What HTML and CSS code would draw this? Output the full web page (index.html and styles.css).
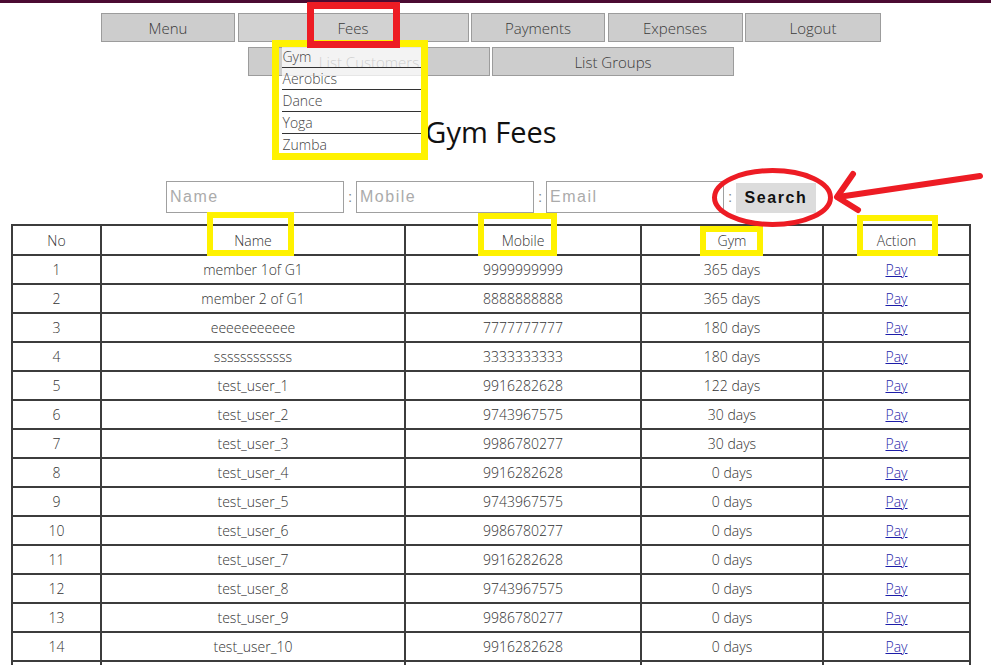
FILE: index.html
```html
<!DOCTYPE html>
<html>
<head>
<meta charset="utf-8">
<title>Gym Fees</title>
<link rel="stylesheet" href="styles.css">
</head>
<body>
<div class="topbar"></div>
<div class="page">
  <nav class="nav">
    <div class="nav-row">
      <a class="nav-btn w-menu">Menu</a>
      <div class="nav-btn w-fees fees">Fees
        <ul class="dropdown">
          <li>Gym</li>
          <li>Aerobics</li>
          <li>Dance</li>
          <li>Yoga</li>
          <li>Zumba</li>
        </ul>
      </div>
      <a class="nav-btn w-pay">Payments</a>
      <a class="nav-btn w-exp">Expenses</a>
      <a class="nav-btn w-out">Logout</a>
    </div>
    <div class="nav-row">
      <a class="nav-btn w-list">List Customers</a>
      <a class="nav-btn w-list">List Groups</a>
    </div>
  </nav>

  <h1 class="title">Gym Fees</h1>

  <form class="search">
    <input class="field" type="text" placeholder="Name">
    <span class="colon">:</span>
    <input class="field" type="text" placeholder="Mobile">
    <span class="colon">:</span>
    <input class="field" type="text" placeholder="Email">
    <span class="colon">:</span>
    <button class="search-btn" type="button">Search</button>
  </form>

  <table class="fees-table">
    <colgroup>
      <col class="c-no"><col class="c-name"><col class="c-mobile"><col class="c-gym"><col class="c-action">
    </colgroup>
    <thead>
      <tr><th>No</th><th>Name</th><th>Mobile</th><th>Gym</th><th>Action</th></tr>
    </thead>
    <tbody>
      <tr><td>1</td><td>member 1of G1</td><td>9999999999</td><td>365 days</td><td><a href="#">Pay</a></td></tr>
      <tr><td>2</td><td>member 2 of G1</td><td>8888888888</td><td>365 days</td><td><a href="#">Pay</a></td></tr>
      <tr><td>3</td><td>eeeeeeeeeee</td><td>7777777777</td><td>180 days</td><td><a href="#">Pay</a></td></tr>
      <tr><td>4</td><td>ssssssssssss</td><td>3333333333</td><td>180 days</td><td><a href="#">Pay</a></td></tr>
      <tr><td>5</td><td>test_user_1</td><td>9916282628</td><td>122 days</td><td><a href="#">Pay</a></td></tr>
      <tr><td>6</td><td>test_user_2</td><td>9743967575</td><td>30 days</td><td><a href="#">Pay</a></td></tr>
      <tr><td>7</td><td>test_user_3</td><td>9986780277</td><td>30 days</td><td><a href="#">Pay</a></td></tr>
      <tr><td>8</td><td>test_user_4</td><td>9916282628</td><td>0 days</td><td><a href="#">Pay</a></td></tr>
      <tr><td>9</td><td>test_user_5</td><td>9743967575</td><td>0 days</td><td><a href="#">Pay</a></td></tr>
      <tr><td>10</td><td>test_user_6</td><td>9986780277</td><td>0 days</td><td><a href="#">Pay</a></td></tr>
      <tr><td>11</td><td>test_user_7</td><td>9916282628</td><td>0 days</td><td><a href="#">Pay</a></td></tr>
      <tr><td>12</td><td>test_user_8</td><td>9743967575</td><td>0 days</td><td><a href="#">Pay</a></td></tr>
      <tr><td>13</td><td>test_user_9</td><td>9986780277</td><td>0 days</td><td><a href="#">Pay</a></td></tr>
      <tr><td>14</td><td>test_user_10</td><td>9916282628</td><td>0 days</td><td><a href="#">Pay</a></td></tr>
      <tr class="row-empty"><td></td><td></td><td></td><td></td><td></td></tr>
    </tbody>
  </table>
</div>

<svg class="annotations" width="991" height="665" viewBox="0 0 991 665">
  <rect x="275.5" y="43.5" width="149" height="113" fill="none" stroke="#fff200" stroke-width="7"/>
  <rect x="310.5" y="5.5" width="86" height="39" fill="none" stroke="#ed1c24" stroke-width="7"/>
  <rect x="210" y="215" width="81" height="38" fill="none" stroke="#fff200" stroke-width="6"/>
  <rect x="481" y="216" width="73" height="37" fill="none" stroke="#fff200" stroke-width="6"/>
  <rect x="703" y="229" width="57" height="24" fill="none" stroke="#fff200" stroke-width="6"/>
  <rect x="860" y="218" width="75" height="35" fill="none" stroke="#fff200" stroke-width="6"/>
  <ellipse cx="772.5" cy="197.5" rx="58" ry="27" fill="none" stroke="#ed1c24" stroke-width="5"/>
  <path d="M980 176 L838 197" fill="none" stroke="#ed1c24" stroke-width="6" stroke-linecap="round"/>
  <path d="M853 174 L837 197 L858 210" fill="none" stroke="#ed1c24" stroke-width="6" stroke-linecap="round" stroke-linejoin="round"/>
</svg>
</body>
</html>
```

FILE: styles.css
```css
html, body {
  margin: 0;
  padding: 0;
  background: #ffffff;
}

body {
  font-family: "Open Sans", "Noto Sans", sans-serif;
  font-weight: 300;
  color: #333333;
  position: relative;
}

.topbar {
  height: 3px;
  background: #4b0b32;
}

.page {
  width: 982px;
}

.nav {
  padding-top: 10px;
  display: flex;
  flex-direction: column;
  align-items: center;
  gap: 5px;
}

.nav-row {
  display: flex;
  gap: 2.5px;
  justify-content: center;
}

.nav-row + .nav-row {
  gap: 2px;
}

.nav-btn {
  box-sizing: border-box;
  height: 29px;
  background: #cdcdcd;
  border: 1px solid #9c9c9c;
  font-size: 15px;
  line-height: 29px;
  color: #3a3a3a;
  text-align: center;
  text-decoration: none;
}

.w-menu { width: 134px; }
.w-fees { width: 231px; }
.w-pay { width: 134px; }
.w-exp { width: 135px; }
.w-out { width: 136px; }
.w-list { width: 242px; }

.fees {
  position: relative;
  background: #d2d2d2;
}

.dropdown {
  position: absolute;
  z-index: 5;
  top: 32px;
  left: 43px;
  width: 140px;
  margin: 0;
  padding: 0;
  list-style: none;
  background: rgba(255, 255, 255, 0.75);
  text-align: left;
}

.dropdown li {
  height: 21px;
  line-height: 22px;
  font-size: 14px;
  color: #444444;
  border-bottom: 1px solid #333333;
  padding-left: 1px;
}

.dropdown li:last-child {
  border-bottom: none;
}

.title {
  margin: 38px 0 0;
  font-family: "Open Sans", "Noto Sans", sans-serif;
  font-weight: 400;
  font-size: 29px;
  line-height: 36px;
  color: #111111;
  text-align: center;
}

.search {
  margin: 30px 0 0;
  display: flex;
  justify-content: center;
  align-items: center;
  height: 33px;
}

.field {
  box-sizing: border-box;
  width: 178px;
  height: 32px;
  border: 1px solid #a0a0a0;
  padding: 0 3px;
  font-family: "Liberation Sans", Arial, sans-serif;
  font-size: 16px;
  letter-spacing: 1.5px;
  color: #333333;
  outline: none;
}

.field::placeholder {
  color: #ababab;
}

.colon {
  width: 12px;
  text-align: center;
  font-family: "Liberation Sans", Arial, sans-serif;
  font-size: 15px;
  color: #888888;
}

.search-btn {
  width: 80px;
  height: 30px;
  margin-top: 3px;
  border: none;
  background: #dcdcdc;
  font-family: "Liberation Sans", Arial, sans-serif;
  font-weight: 700;
  font-size: 16px;
  letter-spacing: 1.6px;
  color: #111111;
  padding: 0;
}

.fees-table {
  margin: 11px 0 0 11px;
  width: 958px;
  border-collapse: collapse;
  table-layout: fixed;
  font-size: 14px;
  color: #333333;
}

.c-no { width: 89px; }
.c-name { width: 304px; }
.c-mobile { width: 236px; }
.c-gym { width: 182px; }
.c-action { width: 147px; }

.fees-table th,
.fees-table td {
  border: 2px solid #3c3c3c;
  text-align: center;
  font-weight: 300;
  padding: 4px 0;
  line-height: 19px;
}

.fees-table th {
  padding: 5px 0 4px;
}

.row-empty td {
  height: 19px;
}

.fees-table a {
  color: #1d1da8;
  text-decoration: underline;
}

.annotations {
  position: absolute;
  top: 0;
  left: 0;
  pointer-events: none;
  z-index: 20;
}
```
